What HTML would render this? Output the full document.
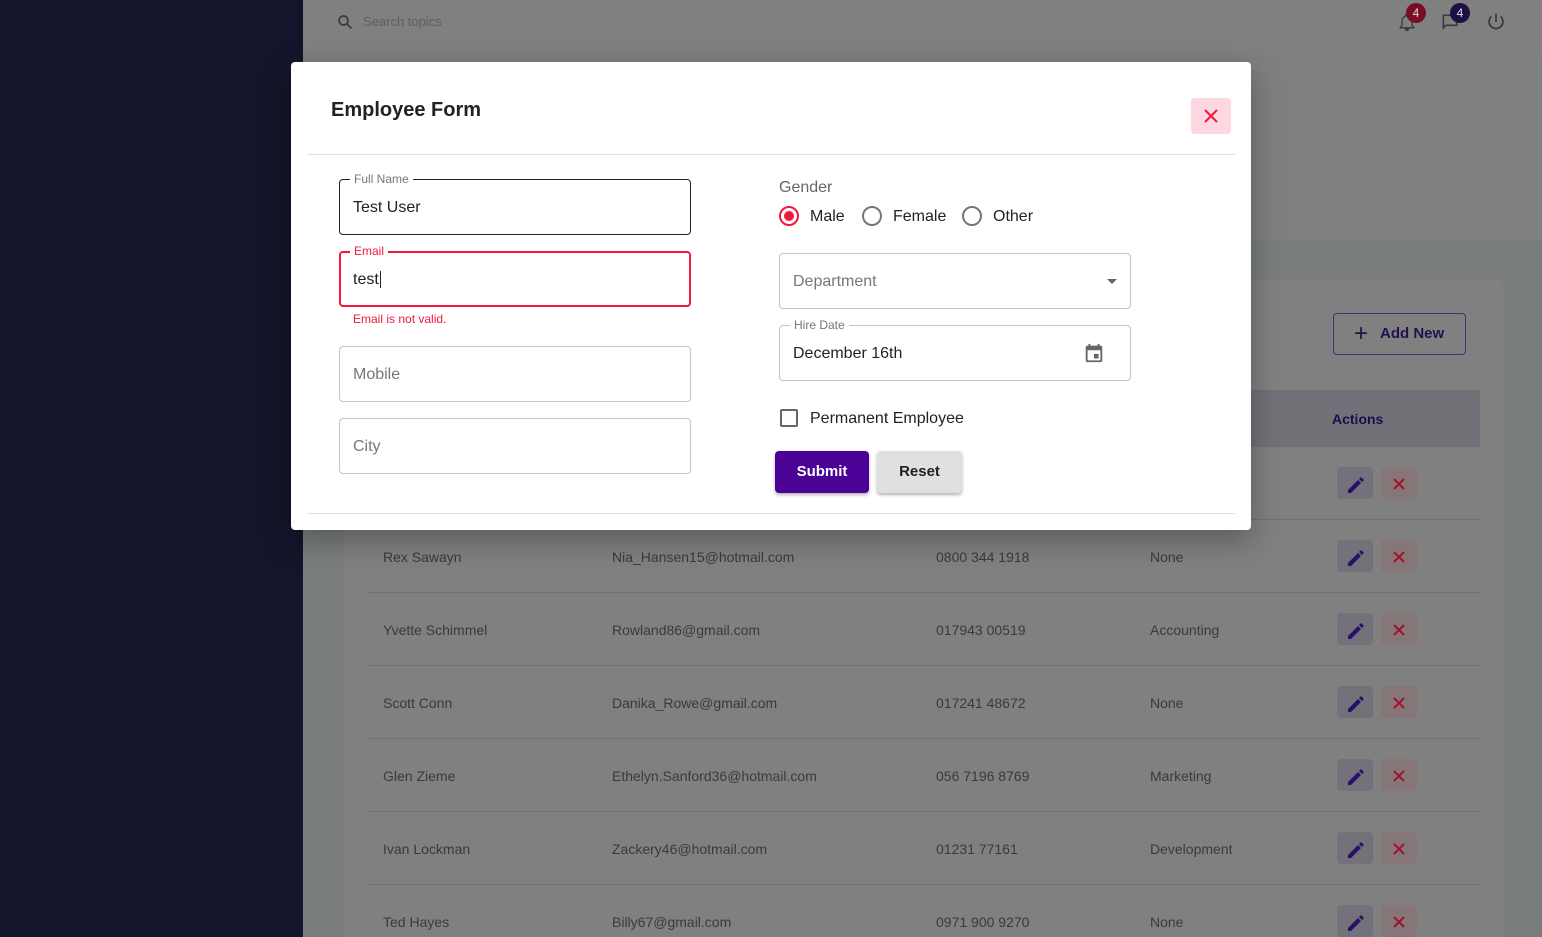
<!DOCTYPE html>
<html style="width:1542px;height:937px;overflow:hidden"><head><meta charset="utf-8"><style>
*{box-sizing:border-box;margin:0;padding:0}
body{width:1542px;height:937px;overflow:hidden;position:relative;font-family:"Liberation Sans",sans-serif;background:#7a7d7e}
.abs{position:absolute}
.side{left:0;top:0;width:303px;height:937px;background:#13152a}
.hdr{left:303px;top:0;width:1239px;height:54px;background:#808080;box-shadow:0 2px 4px rgba(0,0,0,.25)}
.ph{left:303px;top:54px;width:1239px;height:186px;background:#7e8080}
.paper{left:343px;top:280px;width:1160px;height:657px;background:#808080;border-radius:4px 4px 0 0}
.th{left:367px;top:390px;width:1113px;height:57px;background:#737178}
.row{left:367px;width:1113px;height:73px;border-bottom:1px solid #707070;font-size:14px;color:#3a3a3a}
.row span{position:absolute;top:29px}
.ed{position:absolute;left:970px;top:20px;width:36px;height:32px;border-radius:4px;background:#737179}
.dl{position:absolute;left:1014px;top:20px;width:36px;height:32px;border-radius:4px;background:#877677}
.modal{left:291px;top:62px;width:960px;height:468px;background:#fff;border-radius:4px;box-shadow:0 10px 30px rgba(0,0,0,.3)}
.fld{position:absolute;border:1px solid #c4c4c4;border-radius:4px;height:56px;width:352px}
.lbl{position:absolute;top:-8px;left:10px;background:#fff;padding:0 4px;font-size:12px;color:#777}
.val{position:absolute;left:13px;top:19px;font-size:16px;color:#222}
.ph2{color:#777}
.radio{position:absolute;width:20px;height:20px;border:2px solid #757575;border-radius:50%}
</style></head><body>
<div class="abs side"></div>
<div class="abs hdr">
 <svg class="abs" style="left:33px;top:13px" width="18" height="18" viewBox="0 0 24 24"><circle cx="10" cy="10" r="6" fill="none" stroke="#3a3a3a" stroke-width="2.2"/><path d="M14.5 14.5l6 6" stroke="#3a3a3a" stroke-width="2.4"/></svg>
 <div class="abs" style="left:60px;top:14px;font-size:13px;color:#5e5e5e">Search topics</div>
 <svg class="abs" style="left:1094px;top:12px" width="20" height="20" viewBox="0 0 24 24"><path d="M12 22a2 2 0 002-2h-4a2 2 0 002 2zm6-6V11c0-3-1.6-5.6-4.5-6.3V4a1.5 1.5 0 00-3 0v.7C7.6 5.4 6 8 6 11v5l-2 2v1h16v-1z" fill="none" stroke="#3a3a3a" stroke-width="1.6"/></svg>
 <div class="abs" style="left:1103px;top:3px;width:20px;height:20px;border-radius:50%;background:#7a0e26;color:#ddd;font-size:12px;text-align:center;line-height:20px">4</div>
 <svg class="abs" style="left:1137px;top:12px" width="20" height="20" viewBox="0 0 24 24"><path d="M4 4h16v12H7l-3 3z" fill="none" stroke="#3a3a3a" stroke-width="2"/></svg>
 <div class="abs" style="left:1147px;top:3px;width:20px;height:20px;border-radius:50%;background:#1e0f46;color:#ddd;font-size:12px;text-align:center;line-height:20px">4</div>
 <svg class="abs" style="left:1182px;top:11px" width="22" height="22" viewBox="0 0 24 24"><path d="M12 3v9M7 6a7.5 7.5 0 1010 0" fill="none" stroke="#3a3a3a" stroke-width="2"/></svg>
</div>
<div class="abs ph"></div>
<div class="abs paper"></div>
<div class="abs" style="left:1333px;top:313px;width:133px;height:42px;border:1px solid #3a3670;border-radius:4px;color:#23104c;font-size:15px;font-weight:bold;line-height:40px;padding-left:46px">Add New<span style="position:absolute;left:20px;top:0;font-size:24px;font-weight:normal">+</span></div>
<div class="abs th"><span class="abs" style="left:965px;top:21px;font-size:14px;font-weight:bold;color:#1e0c4c">Actions</span></div>
<div class="abs row" style="top:447px"><div class="ed"></div><div class="dl"></div></div>
<div class="abs row" style="top:520px"><span style="left:16px">Rex Sawayn</span><span style="left:245px">Nia_Hansen15@hotmail.com</span><span style="left:569px">0800 344 1918</span><span style="left:783px">None</span><div class="ed"></div><div class="dl"></div></div>
<div class="abs row" style="top:593px"><span style="left:16px">Yvette Schimmel</span><span style="left:245px">Rowland86@gmail.com</span><span style="left:569px">017943 00519</span><span style="left:783px">Accounting</span><div class="ed"></div><div class="dl"></div></div>
<div class="abs row" style="top:666px"><span style="left:16px">Scott Conn</span><span style="left:245px">Danika_Rowe@gmail.com</span><span style="left:569px">017241 48672</span><span style="left:783px">None</span><div class="ed"></div><div class="dl"></div></div>
<div class="abs row" style="top:739px"><span style="left:16px">Glen Zieme</span><span style="left:245px">Ethelyn.Sanford36@hotmail.com</span><span style="left:569px">056 7196 8769</span><span style="left:783px">Marketing</span><div class="ed"></div><div class="dl"></div></div>
<div class="abs row" style="top:812px"><span style="left:16px">Ivan Lockman</span><span style="left:245px">Zackery46@hotmail.com</span><span style="left:569px">01231 77161</span><span style="left:783px">Development</span><div class="ed"></div><div class="dl"></div></div>
<div class="abs row" style="top:885px"><span style="left:16px">Ted Hayes</span><span style="left:245px">Billy67@gmail.com</span><span style="left:569px">0971 900 9270</span><span style="left:783px">None</span><div class="ed"></div><div class="dl"></div></div>
<svg class="abs" style="left:0;top:0" width="1542" height="937">
<g id="ic">
<path d="M1348 490l10-10 3 3-10 10h-3z" fill="#2a0f6a"/><path d="M1359 479l2-2 3 3-2 2z" fill="#2a0f6a"/>
<path d="M1394 479l10 10M1404 479l-10 10" stroke="#a3102c" stroke-width="2"/>
</g>
<use href="#ic" y="73"/><use href="#ic" y="146"/><use href="#ic" y="219"/><use href="#ic" y="292"/><use href="#ic" y="365"/><use href="#ic" y="438"/>
</svg>

<div class="abs modal">
 <div class="abs" style="left:40px;top:37px;font-size:20px;font-weight:bold;color:#222">Employee Form</div>
 <div class="abs" style="left:900px;top:36px;width:40px;height:36px;border-radius:4px;background:#fdd8e0"></div>
 <svg class="abs" style="left:911px;top:45px" width="18" height="18"><path d="M3 3l12 12M15 3L3 15" stroke="#f3173f" stroke-width="2"/></svg>
 <div class="abs" style="left:16px;top:92px;width:928px;height:1px;background:#e0e0e0"></div>
 <div class="abs" style="left:16px;top:451px;width:928px;height:1px;background:#e0e0e0"></div>

 <div class="fld" style="left:48px;top:117px;border-color:#222"><div class="lbl">Full Name</div><div class="val">Test User</div></div>
 <div class="fld" style="left:48px;top:189px;border:2px solid #f3173f"><div class="lbl" style="color:#f3173f;top:-9px;left:9px">Email</div><div class="val" style="left:12px;top:18px">test<span style="border-left:1px solid #222;margin-left:1px"></span></div></div>
 <div class="abs" style="left:62px;top:250px;font-size:12px;color:#f3173f">Email is not valid.</div>
 <div class="fld" style="left:48px;top:284px"><div class="val ph2">Mobile</div></div>
 <div class="fld" style="left:48px;top:356px"><div class="val ph2">City</div></div>

 <div class="abs" style="left:488px;top:117px;font-size:16px;color:#666">Gender</div>
 <div class="radio" style="left:488px;top:144px;border-color:#f3173f"><div style="position:absolute;left:3px;top:3px;width:10px;height:10px;border-radius:50%;background:#f3173f"></div></div>
 <div class="abs" style="left:519px;top:146px;font-size:16px;color:#222">Male</div>
 <div class="radio" style="left:571px;top:144px"></div>
 <div class="abs" style="left:602px;top:146px;font-size:16px;color:#222">Female</div>
 <div class="radio" style="left:671px;top:144px"></div>
 <div class="abs" style="left:702px;top:146px;font-size:16px;color:#222">Other</div>

 <div class="fld" style="left:488px;top:191px"><div class="val ph2">Department</div><div style="position:absolute;right:13px;top:25px;border:5px solid transparent;border-top-color:#666;border-bottom:0"></div></div>
 <div class="fld" style="left:488px;top:263px"><div class="lbl">Hire Date</div><div class="val">December 16th</div>
  <svg style="position:absolute;left:303px;top:15px" width="22" height="24" viewBox="0 0 24 24"><path d="M19 4h-1V2h-2v2H8V2H6v2H5a2 2 0 00-2 2v14a2 2 0 002 2h14a2 2 0 002-2V6a2 2 0 00-2-2zm0 16H5V9h14zM12 13h5v5h-5z" fill="#666"/></svg></div>
 <div class="abs" style="left:489px;top:347px;width:18px;height:18px;border:2px solid #666;border-radius:2px"></div>
 <div class="abs" style="left:519px;top:348px;font-size:16px;color:#222">Permanent Employee</div>
 <div class="abs" style="left:484px;top:389px;width:94px;height:42px;border-radius:4px;background:#4a0396;color:#fff;font-size:15px;font-weight:bold;text-align:center;line-height:42px;box-shadow:0 2px 3px rgba(0,0,0,.3)">Submit</div>
 <div class="abs" style="left:586px;top:389px;width:85px;height:42px;border-radius:4px;background:#e0e0e0;color:#222;font-size:15px;font-weight:bold;text-align:center;line-height:42px;box-shadow:0 2px 3px rgba(0,0,0,.3)">Reset</div>
</div>
</body></html>
